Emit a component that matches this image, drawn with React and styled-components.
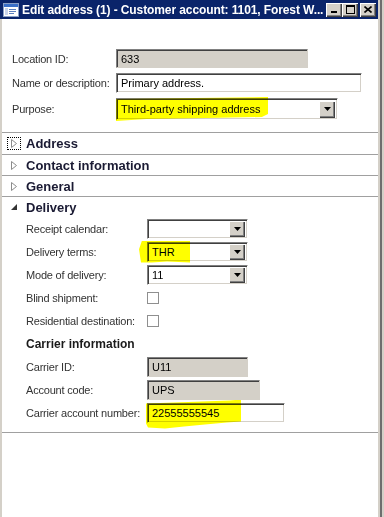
import React from 'react';
import styled, { createGlobalStyle } from 'styled-components';

const GlobalStyle = createGlobalStyle`
  html, body {
    margin: 0;
    padding: 0;
    background: #d4d0c8;
  }
  body {
    font-family: "Liberation Sans", Arial, sans-serif;
    font-size: 11px;
  }
`;

const Screen = styled.div`
  display: flex;
  width: 384px;
  height: 517px;
  overflow: hidden;
  background: #d4d0c8;
`;

const Window = styled.div`
  width: 378px;
  display: flex;
  flex-direction: column;
`;

const Edge = styled.div`
  width: 6px;
  background: linear-gradient(to right, #d4d0c8 0 2px, #6e6e6e 2px 4px, #d4d0c8 4px);
`;

const TitleBar = styled.div`
  display: flex;
  align-items: center;
  height: 19px;
  padding: 0 2px 0 3px;
  background: #0a246a;
`;

const Title = styled.span`
  margin-left: 3px;
  color: #fff;
  font-weight: bold;
  font-size: 12px;
  letter-spacing: -0.1px;
  white-space: nowrap;
`;

const Caption = styled.div`
  display: flex;
  margin-left: auto;
`;

const CapButton = styled.div`
  box-sizing: border-box;
  width: 16px;
  height: 14px;
  margin-left: ${p => p.$gap || 0}px;
  display: flex;
  align-items: center;
  justify-content: center;
  background: #d4d0c8;
  box-shadow: inset 1px 1px #fff, inset -1px -1px #404040, inset -2px -2px #808080;
`;

const Body = styled.div`
  flex: 1;
  display: flex;
  flex-direction: column;
  background: #fff;
  border-left: 2px solid #d4d0c8;
`;

const TopForm = styled.div`
  display: grid;
  grid-template-columns: 104px auto;
  row-gap: 5px;
  align-items: center;
  padding: 30px 0 12px 10px;
`;

const Label = styled.span`
  color: #333;
  letter-spacing: -0.2px;
  white-space: nowrap;
`;

const Wrap = styled.div`
  position: relative;
  width: ${p => p.$w}px;
`;

const Field = styled.div`
  box-sizing: border-box;
  width: ${p => p.$w}px;
  height: ${p => p.$h || 20}px;
  display: flex;
  align-items: center;
  padding-left: 4px;
  color: #000;
  background: ${p => (p.$readOnly ? '#d4d0c8' : '#fff')};
  border: 1px solid;
  border-color: ${p => (p.$readOnly ? '#808080 #d4d0c8 #d4d0c8 #808080' : '#808080 #fff #fff #808080')};
  box-shadow: inset 1px 1px #404040, inset -1px -1px #d4d0c8;
`;

const Combo = styled(Field)`
  padding-right: 2px;
  justify-content: space-between;
`;

const DropButton = styled.div`
  box-sizing: border-box;
  width: 16px;
  height: ${p => p.$h || 16}px;
  display: flex;
  align-items: center;
  justify-content: center;
  background: #d4d0c8;
  box-shadow: inset 1px 1px #fff, inset -1px -1px #404040, inset -2px -2px #808080;
`;

const Marker = styled.div`
  position: absolute;
  left: ${p => p.$x}px;
  top: ${p => p.$y}px;
  width: ${p => p.$w}px;
  height: ${p => p.$h}px;
  background: #ffff00;
  mix-blend-mode: multiply;
  clip-path: ${p => p.$clip};
  pointer-events: none;
`;

const SectionHeader = styled.div`
  display: flex;
  align-items: center;
  gap: 5px;
  height: ${p => (p.$first ? 21 : 20)}px;
  padding-left: 5px;
  border-top: 1px solid #a0a0a0;
  font-weight: bold;
  font-size: 13px;
  color: #1a1a33;
`;

const Toggle = styled.div`
  box-sizing: border-box;
  width: 14px;
  height: 13px;
  display: flex;
  align-items: center;
  justify-content: center;
  border: 1px dotted ${p => (p.$focus ? '#000' : 'transparent')};
`;

const Delivery = styled.div`
  display: grid;
  grid-template-columns: 121px auto;
  grid-auto-rows: 23px;
  align-items: center;
  padding: 0 0 8px 24px;
  border-bottom: 1px solid #a0a0a0;
`;

const SubHeading = styled.div`
  grid-column: 1 / -1;
  font-weight: bold;
  font-size: 12px;
  color: #1a1a1a;
`;

const Check = styled.div`
  box-sizing: border-box;
  width: 12px;
  height: 12px;
  background: #fff;
  border: 1px solid #8f8f8f;
`;

const WindowIcon = () => (
  <svg width="16" height="14" viewBox="0 0 16 14">
    <rect x="0.5" y="0.5" width="15" height="13" fill="#fff" stroke="#8aa0c8" />
    <rect x="1" y="1" width="14" height="3" fill="#3a6fc8" />
    <rect x="2" y="5" width="3" height="7" fill="#c8d4ec" />
    <rect x="6" y="6" width="7" height="1" fill="#5b7fbf" />
    <rect x="6" y="8" width="7" height="1" fill="#5b7fbf" />
    <rect x="6" y="10" width="5" height="1" fill="#5b7fbf" />
  </svg>
);

const Minimize = () => (
  <svg width="8" height="7" viewBox="0 0 8 7">
    <rect x="1" y="5" width="6" height="2" fill="#000" />
  </svg>
);

const Maximize = () => (
  <svg width="9" height="9" viewBox="0 0 9 9">
    <path d="M0 0h9v9H0z M1 2v6h7V2z" fill="#000" fillRule="evenodd" />
  </svg>
);

const Close = () => (
  <svg width="8" height="7" viewBox="0 0 8 7">
    <path d="M0.5 0.5 L7.5 6.5 M7.5 0.5 L0.5 6.5" stroke="#000" strokeWidth="1.6" />
  </svg>
);

const DownArrow = () => (
  <svg width="7" height="4" viewBox="0 0 7 4">
    <path d="M0 0h7L3.5 4z" fill="#000" />
  </svg>
);

const Collapsed = () => (
  <svg width="6" height="9" viewBox="0 0 6 9">
    <path d="M0.5 0.5 L5.5 4.5 L0.5 8.5 Z" fill="none" stroke="#8c8c8c" />
  </svg>
);

const Expanded = () => (
  <svg width="6" height="6" viewBox="0 0 6 6">
    <path d="M6 0 V6 H0 Z" fill="#333" />
  </svg>
);

const Section = ({ title, open, focus, first }) => (
  <SectionHeader $first={first}>
    <Toggle $focus={focus}>{open ? <Expanded /> : <Collapsed />}</Toggle>
    {title}
  </SectionHeader>
);

const DropDown = ({ w, h, value, btnH }) => (
  <Combo $w={w} $h={h}>
    <span>{value}</span>
    <DropButton $h={btnH}>
      <DownArrow />
    </DropButton>
  </Combo>
);

export default function App() {
  return (
    <Screen>
      <GlobalStyle />
      <Window>
        <TitleBar>
          <WindowIcon />
          <Title>Edit address (1) - Customer account: 1101, Forest W...</Title>
          <Caption>
            <CapButton><Minimize /></CapButton>
            <CapButton><Maximize /></CapButton>
            <CapButton $gap={2}><Close /></CapButton>
          </Caption>
        </TitleBar>
        <Body>
          <TopForm>
            <Label>Location ID:</Label>
            <Field $w={192} $h={19} $readOnly>633</Field>
            <Label>Name or description:</Label>
            <Field $w={246}>Primary address.</Field>
            <Label>Purpose:</Label>
            <Wrap $w={222}>
              <DropDown w={222} h={22} value="Third-party shipping address" btnH={17} />
              <Marker
                $x={0}
                $y={-1}
                $w={152}
                $h={24}
                $clip="polygon(0 2px, 100% 0, 100% 17px, 96% 20px, 60% 21px, 20% 22px, 0 24px)"
              />
            </Wrap>
          </TopForm>
          <Section title="Address" focus first />
          <Section title="Contact information" />
          <Section title="General" />
          <Section title="Delivery" open />
          <Delivery>
            <Label>Receipt calendar:</Label>
            <DropDown w={101} value="" />
            <Label>Delivery terms:</Label>
            <Wrap $w={101}>
              <DropDown w={101} value="THR" />
              <Marker
                $x={-8}
                $y={-1}
                $w={51}
                $h={22}
                $clip="polygon(3px 0, 100% 0, 100% 100%, 55% 95%, 25% 100%, 2px 100%, 0 40%)"
              />
            </Wrap>
            <Label>Mode of delivery:</Label>
            <DropDown w={101} value="11" />
            <Label>Blind shipment:</Label>
            <Check />
            <Label>Residential destination:</Label>
            <Check />
            <SubHeading>Carrier information</SubHeading>
            <Label>Carrier ID:</Label>
            <Field $w={101} $readOnly>U11</Field>
            <Label>Account code:</Label>
            <Field $w={113} $readOnly>UPS</Field>
            <Label>Carrier account number:</Label>
            <Wrap $w={138}>
              <Field $w={138}>22555555545</Field>
              <Marker
                $x={-1}
                $y={-3}
                $w={95}
                $h={29}
                $clip="polygon(0 4px, 88% 1px, 100% 0, 100% 22px, 85% 23px, 62% 25px, 40% 27px, 20% 29px, 2px 28px, 0 24px)"
              />
            </Wrap>
          </Delivery>
        </Body>
      </Window>
      <Edge />
    </Screen>
  );
}
